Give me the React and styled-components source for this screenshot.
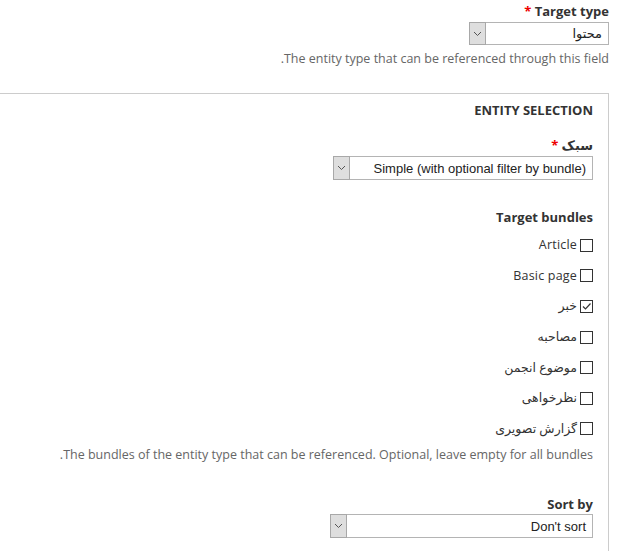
import React from 'react';
import styled, { createGlobalStyle } from 'styled-components';

const GlobalStyle = createGlobalStyle`
  html, body {
    margin: 0;
    padding: 0;
    background: #fff;
  }
  body {
    font-family: "Open Sans", "DejaVu Sans", sans-serif;
    color: #333;
  }
`;

const bundles = [
  { label: 'Article', checked: false },
  { label: 'Basic page', checked: false },
  { label: 'خبر', checked: true },
  { label: 'مصاحبه', checked: false },
  { label: 'موضوع انجمن', checked: false },
  { label: 'نظرخواهی', checked: false },
  { label: 'گزارش تصویری', checked: false },
];

function Select({ value, width, height }) {
  return (
    <SelectBox $width={width} $height={height}>
      <SelectValue>{value}</SelectValue>
      <ArrowBox>
        <svg width="9" height="6" viewBox="0 0 9 6">
          <path d="M1 1 L4.5 4.5 L8 1" fill="none" stroke="#555" strokeWidth="1" />
        </svg>
      </ArrowBox>
    </SelectBox>
  );
}

function Checkbox({ checked, label }) {
  return (
    <CheckRow>
      <Box>
        {checked && (
          <svg width="11" height="11" viewBox="0 0 11 11">
            <path d="M2 5.5 L4.5 8 L9.5 2.5" fill="none" stroke="#333" strokeWidth="1.2" />
          </svg>
        )}
      </Box>
      <CheckLabel>{label}</CheckLabel>
    </CheckRow>
  );
}

export default function App() {
  return (
    <>
      <GlobalStyle />
      <Page dir="rtl">
        <FormItem>
          <Label>
            Target type <Required>*</Required>
          </Label>
          <Select value="محتوا" width={140} height={23} />
          <Description>The entity type that can be referenced through this field.</Description>
        </FormItem>

        <Fieldset>
          <Legend>ENTITY SELECTION</Legend>

          <FormItem $top={16}>
            <Label>
              سبک <Required>*</Required>
            </Label>
            <Select value="Simple (with optional filter by bundle)" width={260} height={24} />
          </FormItem>

          <FormItem $top={26}>
            <Label>Target bundles</Label>
            <CheckList>
              {bundles.map((b) => (
                <Checkbox key={b.label} label={b.label} checked={b.checked} />
              ))}
            </CheckList>
            <Description $top={3}>
              The bundles of the entity type that can be referenced. Optional, leave empty for all bundles.
            </Description>
          </FormItem>

          <FormItem $top={30} $tight>
            <Label>Sort by</Label>
            <Select value="Don't sort" width={263} height={24} />
          </FormItem>
        </Fieldset>
      </Page>
    </>
  );
}

const Page = styled.div`
  padding: 0 8px 0 0;
  direction: rtl;
`;

const FormItem = styled.div`
  display: flex;
  flex-direction: column;
  align-items: flex-start;
  margin-top: ${(p) => p.$top || 0}px;

  > div:first-child {
    margin-bottom: ${(p) => (p.$tight ? 1 : 2)}px;
  }
`;

const Label = styled.div`
  font-size: 13px;
  font-weight: 700;
  line-height: 18px;
  margin: 2px 0 2px;
  color: #333;
`;

const Required = styled.span`
  color: #e00;
  font-weight: 700;
`;

const Description = styled.div`
  font-size: 12.5px;
  line-height: 16px;
  margin-top: ${(p) => (p.$top !== undefined ? p.$top : 6)}px;
  color: #666;
`;

const Fieldset = styled.div`
  margin-top: 26px;
  border: 1px solid #ccc;
  border-left: none;
  padding: 0 15px 20px 0;
`;

const Legend = styled.div`
  margin-top: 8px;
  font-size: 13px;
  font-weight: 700;
  line-height: 16px;
  color: #333;
`;

const SelectBox = styled.div`
  display: flex;
  flex-direction: row;
  width: ${(p) => p.$width}px;
  height: ${(p) => p.$height}px;
  box-sizing: border-box;
  border: 1px solid #b4b4b4;
  border-left: none;
  background: #fff;
`;

const SelectValue = styled.div`
  flex: 1;
  font-family: "Liberation Sans", Arial, "DejaVu Sans", sans-serif;
  font-size: 13px;
  color: #222;
  display: flex;
  align-items: center;
  padding-right: 6px;
`;

const ArrowBox = styled.div`
  width: 17px;
  box-sizing: border-box;
  margin: -1px 0;
  background: #dedede;
  border: 1px solid #a8a8a8;
  display: flex;
  align-items: center;
  justify-content: center;
`;

const CheckList = styled.div`
  display: flex;
  flex-direction: column;
  margin-top: 2px;
`;

const CheckRow = styled.div`
  display: flex;
  align-items: center;
  gap: 3px;
  height: 30.6px;
`;

const Box = styled.div`
  width: 13px;
  height: 13px;
  box-sizing: border-box;
  border: 1px solid #333;
  background: #fff;
  display: flex;
  align-items: center;
  justify-content: center;
`;

const CheckLabel = styled.span`
  font-size: 12.5px;
  letter-spacing: 0.2px;
  color: #333;
  line-height: 16px;
`;
